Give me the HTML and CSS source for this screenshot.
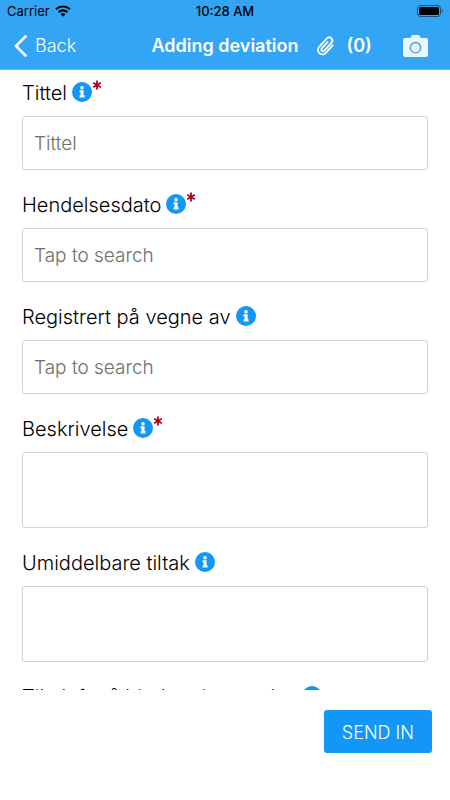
FILE: index.html
```html
<!DOCTYPE html>
<html lang="nb">
<head>
<meta charset="utf-8">
<meta name="viewport" content="width=device-width, initial-scale=1">
<title>Adding deviation</title>
<link rel="stylesheet" href="styles.css">
</head>
<body>
<svg class="defs" aria-hidden="true">
  <symbol id="info" viewBox="0 0 20 20">
    <circle cx="10" cy="10" r="10" fill="#1297f6"/>
    <circle cx="10" cy="5.700" r="1.800" fill="#fff"/>
    <path d="M7.600 8.300h4v4.900h1v2.200H7.600v-2.200h1v-2.700h-1z" fill="#fff"/>
  </symbol>
  <symbol id="star" viewBox="0 0 10 10">
    <path d="M5 .6v8.800M1.200 2.800l7.600 4.400M8.800 2.800L1.200 7.200" stroke="#b0021b" stroke-width="1.800" fill="none"/>
  </symbol>
</svg>
<header class="top">
  <div class="status">
    <div class="carrier">
      <span>Carrier</span>
      <svg width="16" height="12" viewBox="0 0 16 12" aria-hidden="true">
        <path d="M1 4.300a10.200 10.200 0 0 1 14 0" fill="none" stroke="#000" stroke-width="2.200"/>
        <path d="M3.500 7.200a6.500 6.500 0 0 1 9 0" fill="none" stroke="#000" stroke-width="2.100"/>
        <path d="M5.500 9.200a3.700 3.700 0 0 1 5 0L8 11.800z"/>
      </svg>
    </div>
    <time>10:28 AM</time>
    <svg class="battery" width="26" height="12" viewBox="0 0 26 12" aria-hidden="true">
      <rect x=".5" y=".5" width="23" height="11" rx="3" fill="none" stroke="#000" stroke-opacity=".5"/>
      <rect x="2" y="2" width="20" height="8" rx="1.600"/>
      <path d="M24.700 4v4c1.400-.5 1.400-3.500 0-4z" fill-opacity=".5"/>
    </svg>
  </div>
  <nav class="nav">
    <a class="back" href="#">
      <svg width="13" height="22" viewBox="0 0 13 22" aria-hidden="true"><path d="M11.500 1.500L2 11l9.500 9.500" fill="none" stroke="#fff" stroke-width="2.600" stroke-linecap="round" stroke-linejoin="round"/></svg>
      <span>Back</span>
    </a>
    <h1 class="title">Adding deviation</h1>
    <div class="actions">
      <button class="attach" type="button" aria-label="Attachments (0)">
        <svg width="18" height="20" viewBox="0 0 18 20" aria-hidden="true">
          <path d="M4.500-5V5.200a4.500 4.500 0 0 1-9 0V-6a3.200 3.200 0 0 1 6.400 0V4.600a1.700 1.700 0 0 1-3.400 0V-4" transform="translate(9 10) rotate(42)" fill="none" stroke="#fff" stroke-width="1.800" stroke-linecap="round" stroke-linejoin="round"/>
        </svg>
        <span>(0)</span>
      </button>
      <button class="camera" type="button" aria-label="Camera">
        <svg width="25" height="22" viewBox="0 0 25 22" aria-hidden="true">
          <path fill="#ebf6ff" d="M2 3h5.300l.9-2Q8.700 0 9.700 0h5.600q1 0 1.500 1l.9 2H23q2 0 2 2v15q0 2-2 2H2q-2 0-2-2V5q0-2 2-2z"/>
          <circle cx="12.500" cy="12.700" r="5.200" fill="none" stroke="#32a5f5" stroke-width="1.400"/>
        </svg>
      </button>
    </div>
  </nav>
</header>
<main class="form">
  <div class="field">
    <div class="caption"><label for="tittel">Tittel</label><button class="info" type="button" aria-label="Info"><svg><use href="#info"/></svg></button><svg class="star"><use href="#star"/></svg></div>
    <input id="tittel" type="text" placeholder="Tittel">
  </div>
  <div class="field">
    <div class="caption"><label for="dato">Hendelsesdato</label><button class="info" type="button" aria-label="Info"><svg><use href="#info"/></svg></button><svg class="star"><use href="#star"/></svg></div>
    <input id="dato" type="text" placeholder="Tap to search">
  </div>
  <div class="field">
    <div class="caption"><label for="vegne">Registrert på vegne av</label><button class="info" type="button" aria-label="Info"><svg><use href="#info"/></svg></button></div>
    <input id="vegne" type="text" placeholder="Tap to search">
  </div>
  <div class="field">
    <div class="caption"><label for="beskrivelse">Beskrivelse</label><button class="info" type="button" aria-label="Info"><svg><use href="#info"/></svg></button><svg class="star"><use href="#star"/></svg></div>
    <textarea id="beskrivelse"></textarea>
  </div>
  <div class="field">
    <div class="caption"><label for="tiltak">Umiddelbare tiltak</label><button class="info" type="button" aria-label="Info"><svg><use href="#info"/></svg></button></div>
    <textarea id="tiltak"></textarea>
  </div>
  <div class="field">
    <div class="caption"><label for="hindre">Tiltak for å hindre gjentagelse</label><button class="info" type="button" aria-label="Info"><svg><use href="#info"/></svg></button></div>
    <textarea id="hindre"></textarea>
  </div>
</main>
<footer class="footer">
  <button class="send" type="submit">SEND IN</button>
</footer>
</body>
</html>
```
FILE: styles.css
```css
* { box-sizing: border-box; }

body {
  margin: 0;
  height: 100vh;
  display: flex;
  flex-direction: column;
  background: #fff;
  color: #000;
  font-family: Inter, "Liberation Sans", sans-serif;
  font-size: 20px;
  font-weight: 300;
}

button {
  padding: 0;
  border: 0;
  background: none;
  color: inherit;
  font: inherit;
}

svg { display: block; flex: none; }

.defs { position: absolute; width: 0; height: 0; }

.top { background: #32a5f5; }

.status,
.nav {
  display: grid;
  grid-template-columns: 1fr auto 1fr;
  align-items: center;
}

.status {
  height: 22px;
  padding: 0 7px;
  font-size: 13px;
  font-weight: 400;
}

.carrier { display: flex; align-items: center; gap: 5px; }

.status time { font-weight: 500; }

.battery { justify-self: end; }

.nav {
  height: 48px;
  padding: 0 14px;
  border-bottom: 1px solid #6cbdf6;
  color: #fff;
}

.back {
  display: flex;
  align-items: center;
  gap: 8px;
  color: inherit;
  font-size: 18px;
  text-decoration: none;
}

.title { margin: 0; font-size: 18px; font-weight: 600; }

.actions {
  display: flex;
  align-items: center;
  justify-content: space-between;
  padding: 0 8px 0 18px;
}

.attach {
  display: flex;
  align-items: center;
  gap: 12px;
  font-size: 18px;
  font-weight: 600;
}

.form {
  flex: 1;
  min-height: 0;
  overflow: hidden;
  padding: 10px 22px 0;
}

.field { margin-bottom: 22px; }

.caption {
  display: flex;
  align-items: center;
  height: 24px;
  margin-bottom: 12px;
}

.caption label { padding-top: 2px; }

.info { margin-left: 5px; }

.info svg { width: 20px; height: 20px; }

.star { width: 10px; height: 10px; align-self: flex-start; }

input,
textarea {
  display: block;
  width: 100%;
  height: 54px;
  padding: 1px 11px 0;
  border: 1px solid #d2d2d2;
  border-radius: 3px;
  background: #fff;
  color: inherit;
  font: inherit;
  font-size: 19px;
  resize: none;
}

textarea { height: 76px; padding: 11px; }

::placeholder { color: #6e6e6e; opacity: 1; }

.footer {
  display: flex;
  justify-content: flex-end;
  padding: 20px 18px 47px;
}

.send {
  height: 43px;
  padding: 1px 18px 0;
  border-radius: 3px;
  background: #1297f6;
  color: #fff;
  font-size: 18px;
}
```
